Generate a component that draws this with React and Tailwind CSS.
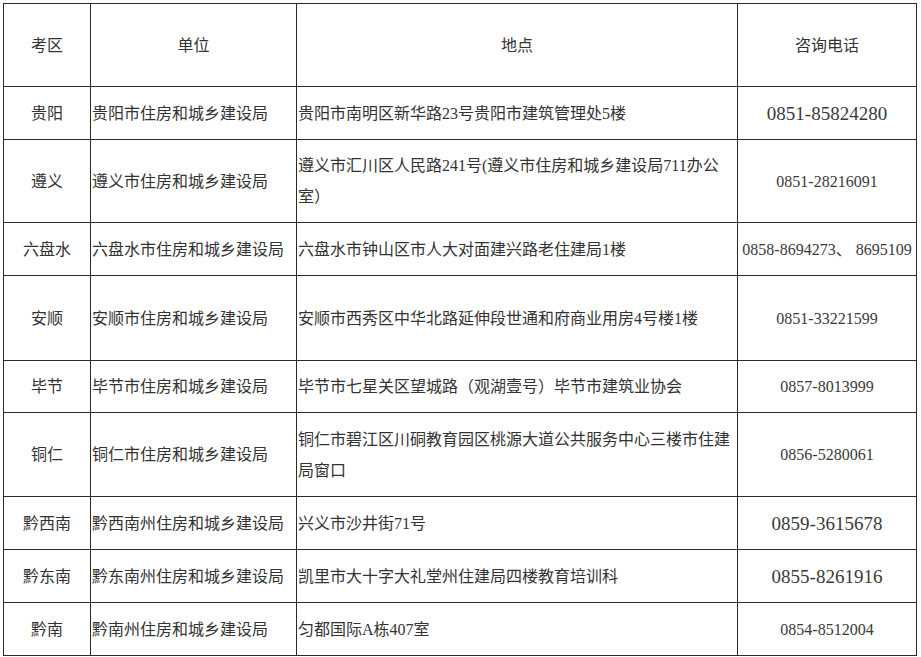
export default function App() {
  const rows = [
    { area: "贵阳", unit: "贵阳市住房和城乡建设局", addr: "贵阳市南明区新华路23号贵阳市建筑管理处5楼", phone: "0851-85824280", big: true, h: "h-[53px]" },
    { area: "遵义", unit: "遵义市住房和城乡建设局", addr: ["遵义市汇川区人民路241号(遵义市住房和城乡建设局711办公", "室）"], phone: "0851-28216091", h: "h-[83px]" },
    { area: "六盘水", unit: "六盘水市住房和城乡建设局", addr: "六盘水市钟山区市人大对面建兴路老住建局1楼", phone: "0858-8694273、 8695109", h: "h-[53px]" },
    { area: "安顺", unit: "安顺市住房和城乡建设局", addr: "安顺市西秀区中华北路延伸段世通和府商业用房4号楼1楼", phone: "0851-33221599", h: "h-[85px]" },
    { area: "毕节", unit: "毕节市住房和城乡建设局", addr: "毕节市七星关区望城路（观湖壹号）毕节市建筑业协会", phone: "0857-8013999", h: "h-[52px]" },
    { area: "铜仁", unit: "铜仁市住房和城乡建设局", addr: ["铜仁市碧江区川硐教育园区桃源大道公共服务中心三楼市住建", "局窗口"], phone: "0856-5280061", h: "h-[84px]" },
    { area: "黔西南", unit: "黔西南州住房和城乡建设局", addr: "兴义市沙井街71号", phone: "0859-3615678", big: true, h: "h-[53px]" },
    { area: "黔东南", unit: "黔东南州住房和城乡建设局", addr: "凯里市大十字大礼堂州住建局四楼教育培训科", phone: "0855-8261916", big: true, h: "h-[53px]" },
    { area: "黔南", unit: "黔南州住房和城乡建设局", addr: "匀都国际A栋407室", phone: "0854-8512004", h: "h-[53px]" },
  ];

  const cell = "border border-[#2a2a2a] align-middle p-0";

  return (
    <div className="min-h-screen bg-white pt-[3px] pl-[3px]">
      <table
        className="table-fixed border-collapse w-[913px] text-[16px] text-[#333] leading-[31px]"
        style={{ fontFamily: '"Liberation Serif", "Noto Sans CJK SC", serif' }}
      >
        <colgroup>
          <col className="w-[87px]" />
          <col className="w-[206px]" />
          <col className="w-[441px]" />
          <col className="w-[179px]" />
        </colgroup>
        <tbody>
          {/* header */}
          <tr className="h-[83px]">
            <td className={`${cell} text-center`}>考区</td>
            <td className={`${cell} text-center`}>单位</td>
            <td className={`${cell} text-center`}>地点</td>
            <td className={`${cell} text-center`}>咨询电话</td>
          </tr>
          {rows.map((r) => (
            <tr key={r.area} className={r.h}>
              <td className={`${cell} text-center`}>{r.area}</td>
              <td className={`${cell} pl-[1px] whitespace-nowrap`}>{r.unit}</td>
              <td className={`${cell} pl-[1px]`}>
                {Array.isArray(r.addr) ? (
                  <>
                    {r.addr[0]}
                    <br />
                    {r.addr[1]}
                  </>
                ) : (
                  r.addr
                )}
              </td>
              <td
                className={`${cell} text-center whitespace-nowrap text-[#3a3a3a] ${
                  r.big ? "text-[19px]" : "text-[16px]"
                }`}
              >
                {r.phone}
              </td>
            </tr>
          ))}
        </tbody>
      </table>
    </div>
  );
}
